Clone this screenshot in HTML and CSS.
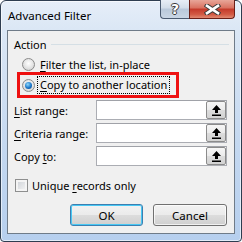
FILE: index.html
```html
<!DOCTYPE html>
<html lang="en">
<head>
    <meta charset="UTF-8">
    <title>Advanced Filter</title>
    <link rel="stylesheet" href="styles.css">
</head>
<body>
    <div class="window">
        <!-- Title bar -->
        <div class="titlebar">
            <span class="title">Advanced Filter</span>
            <div class="caption">
                <span class="cap-btn help">?</span>
                <span class="cap-btn close">
                    <svg width="17" height="11" viewBox="0 0 17 11">
                        <path d="M3 1.8 L14 9.2 M14 1.8 L3 9.2" stroke="#3a3a3a" stroke-width="4.6" stroke-linecap="square"/>
                        <path d="M3 1.8 L14 9.2 M14 1.8 L3 9.2" stroke="#fff" stroke-width="2.6" stroke-linecap="square"/>
                    </svg>
                </span>
            </div>
        </div>

        <div class="client">
            <!-- Action group -->
            <div class="group-head">
                <span>Action</span>
                <span class="rule"></span>
            </div>
            <div class="option">
                <span class="radio"></span>
                <span><u>F</u>ilter the list, in-place</span>
            </div>
            <div class="highlight">
                <div class="option">
                    <span class="radio checked"></span>
                    <span class="focus"><u>C</u>opy to another location</span>
                </div>
            </div>

            <!-- Ranges -->
            <div class="fields">
                <div class="field">
                    <label><u>L</u>ist range:</label>
                    <div class="range">
                        <span class="box"></span>
                        <span class="pick"><svg width="9" height="11" viewBox="0 0 9 11"><path d="M4.5 0 L9 5 L6 5 L6 8 L3 8 L3 5 L0 5 Z M0 9.5 H9 V11 H0 Z" fill="#000"/></svg></span>
                    </div>
                </div>
                <div class="field">
                    <label><u>C</u>riteria range:</label>
                    <div class="range">
                        <span class="box"></span>
                        <span class="pick"><svg width="9" height="11" viewBox="0 0 9 11"><path d="M4.5 0 L9 5 L6 5 L6 8 L3 8 L3 5 L0 5 Z M0 9.5 H9 V11 H0 Z" fill="#000"/></svg></span>
                    </div>
                </div>
                <div class="field">
                    <label>Copy <u>t</u>o:</label>
                    <div class="range">
                        <span class="box"></span>
                        <span class="pick"><svg width="9" height="11" viewBox="0 0 9 11"><path d="M4.5 0 L9 5 L6 5 L6 8 L3 8 L3 5 L0 5 Z M0 9.5 H9 V11 H0 Z" fill="#000"/></svg></span>
                    </div>
                </div>
            </div>

            <div class="check-row">
                <span class="checkbox"></span>
                <span>Unique <u>r</u>ecords only</span>
            </div>

            <div class="actions">
                <button class="btn default">OK</button>
                <button class="btn">Cancel</button>
            </div>
        </div>
    </div>
</body>
</html>
```

FILE: styles.css
```css
/* Base */
body {
    margin: 0;
    font-family: 'Noto Sans', 'Open Sans', sans-serif;
    font-size: 11px;
    color: #000;
    white-space: nowrap;
}

u {
    text-decoration-thickness: 1px;
    text-underline-offset: 2px;
}

/* Window frame */
.window {
    width: 242px;
    height: 242px;
    box-sizing: border-box;
    border: 1px solid #2e3d50;
    border-radius: 6px 6px 4px 4px;
    padding: 0 6px 7px 6px;
    display: flex;
    flex-direction: column;
    background: linear-gradient(to bottom, #e6eef8 0, #dbe7f5 28px, #c4d8f0 60%, #b6cfee 100%);
    box-shadow: inset 0 0 0 1px rgba(255, 255, 255, 0.6);
}

.titlebar {
    height: 29px;
    flex-shrink: 0;
    display: flex;
    justify-content: space-between;
    align-items: flex-start;
}

.title {
    padding: 7px 0 0 1px;
    line-height: 16px;
    font-size: 11.5px;
}

.caption {
    display: flex;
    flex-shrink: 0;
    margin-top: -1px;
}

.cap-btn {
    height: 19px;
    flex-shrink: 0;
    box-sizing: border-box;
    display: flex;
    align-items: center;
    justify-content: center;
    border: 1px solid #4a5a70;
    border-top: none;
}

.help {
    width: 29px;
    border-radius: 0 0 0 4px;
    border-right: none;
    background: linear-gradient(to bottom, #e8eef6 0, #d2dde9 45%, #b9c8da 50%, #c9d6e5 100%);
    color: #fff;
    font-weight: bold;
    font-size: 14px;
    line-height: 17px;
    font-family: 'DejaVu Sans', sans-serif;
    text-shadow: -1px 0 #3a3a3a, 1px 0 #3a3a3a, 0 -1px #3a3a3a, 0 1px #3a3a3a;
}

.close {
    width: 46px;
    border-color: #6b1f17;
    border-radius: 0 0 4px 0;
    background: linear-gradient(to bottom, #e8a699 0, #d9705f 45%, #c4392a 50%, #d25a44 80%, #e08a73 100%);
}

/* Client area */
.client {
    flex: 1;
    border: 1px solid #6f7b88;
    background-color: #f0f0f0;
    padding: 5px 7px 0 6px;
    display: flex;
    flex-direction: column;
}

.group-head {
    height: 16px;
    display: flex;
    align-items: center;
    gap: 4px;
}

.rule {
    flex: 1;
    height: 1px;
    margin-right: -2px;
    background-color: #d5dfe5;
}

.option {
    height: 15px;
    margin-top: 5px;
    padding-left: 8px;
    display: flex;
    align-items: center;
    gap: 5px;
}

.radio {
    width: 13px;
    height: 13px;
    flex-shrink: 0;
    box-sizing: border-box;
    border-radius: 50%;
    border: 1px solid #8a8a8a;
    background: radial-gradient(circle at 50% 40%, #ffffff 0, #e8e8e8 45%, #c9c9c9 100%);
    display: flex;
    align-items: center;
    justify-content: center;
}

.radio.checked::after {
    content: "";
    width: 7px;
    height: 7px;
    border-radius: 50%;
    background: radial-gradient(circle at 40% 35%, #8fd8fb 0, #1a75c8 55%, #0d3f7a 100%);
}

.highlight {
    width: 162px;
    height: 26px;
    box-sizing: border-box;
    margin-left: 3px;
    border: 3px solid #ee1111;
    display: flex;
    align-items: center;
}

.highlight .option {
    margin-top: 0;
    padding-left: 2px;
}

.focus {
    outline: 1px dotted #000;
    outline-offset: 0;
    padding: 0 2px;
    margin-left: -2px;
    line-height: 16px;
}

/* Range fields */
.fields {
    margin-top: 2px;
    display: flex;
    flex-direction: column;
    gap: 3px;
}

.field {
    height: 20px;
    display: flex;
    align-items: center;
}

.field label {
    width: 82px;
    flex-shrink: 0;
}

.range {
    flex: 1;
    height: 20px;
    box-sizing: border-box;
    border: 1px solid #abadb3;
    border-top-color: #a0a2a8;
    background-color: #fff;
    display: flex;
}

.box {
    flex: 1;
}

.pick {
    width: 20px;
    height: 18px;
    box-sizing: border-box;
    border: 1px solid #8b8b8b;
    border-radius: 2px;
    background: linear-gradient(to bottom, #f6f6f6 0, #ebebeb 50%, #dddddd 50%, #d2d2d2 100%);
    display: flex;
    align-items: center;
    justify-content: center;
}

/* Checkbox */
.check-row {
    margin-top: 13px;
    height: 13px;
    padding-left: 1px;
    display: flex;
    align-items: center;
    gap: 4px;
}

.checkbox {
    width: 13px;
    height: 13px;
    flex-shrink: 0;
    box-sizing: border-box;
    border: 1px solid #8e8f8f;
    background: linear-gradient(135deg, #cbcfd5 0, #f6f6f6 100%);
    box-shadow: inset 0 0 0 2px #f4f4f4;
}

/* Buttons */
.actions {
    margin-top: 12px;
    display: flex;
    justify-content: flex-end;
    gap: 10px;
}

.btn {
    width: 74px;
    height: 22px;
    font-family: inherit;
    font-size: 11.5px;
    color: #000;
    border: 1px solid #707070;
    border-radius: 3px;
    background: linear-gradient(to bottom, #f2f2f2 0, #ebebeb 50%, #dddddd 50%, #cfcfcf 100%);
    box-shadow: inset 0 0 0 1px rgba(255, 255, 255, 0.7);
    padding: 0;
}

.btn.default {
    width: 73px;
    border-color: #3c7fb1;
    box-shadow: inset 0 0 0 1px #48c8f4;
}
```
